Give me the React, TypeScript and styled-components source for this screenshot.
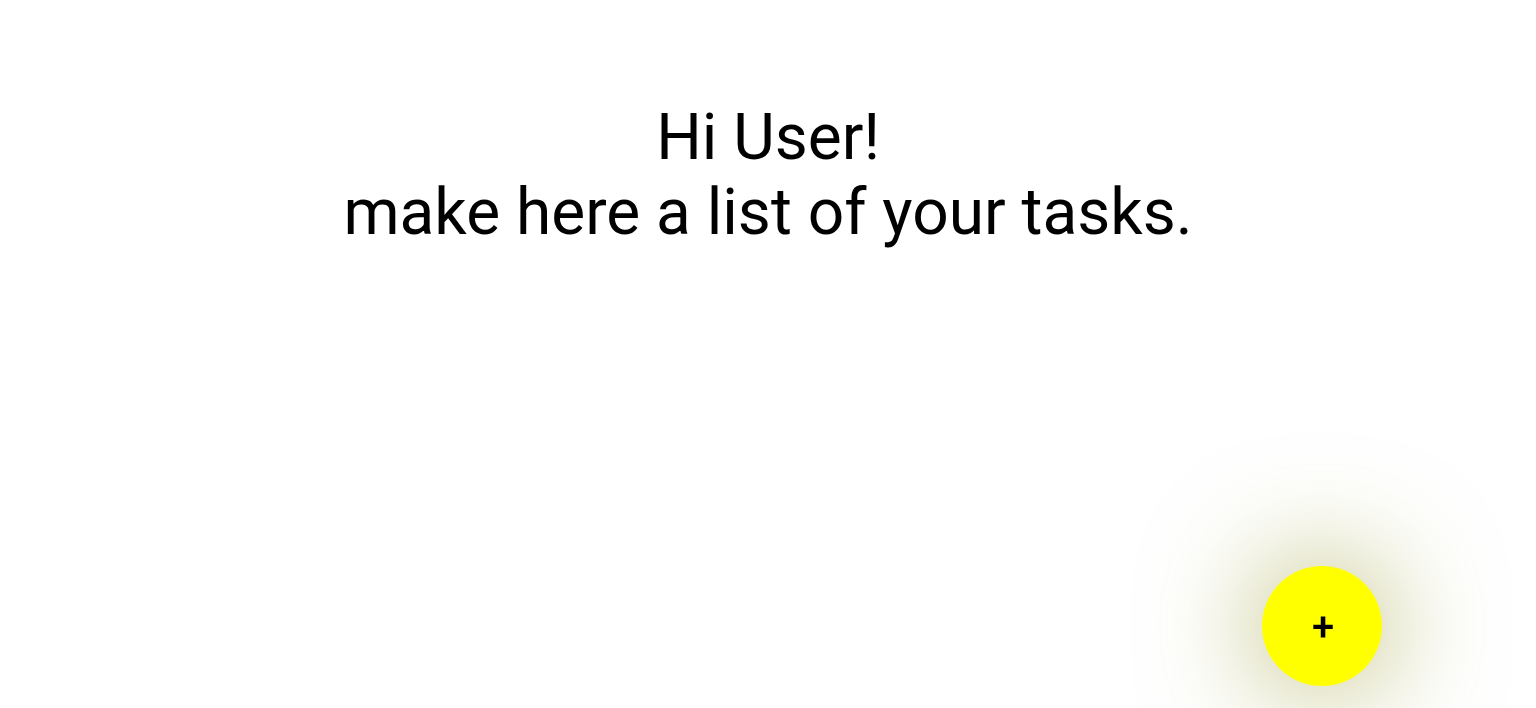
import React from "react";
import styled, { createGlobalStyle } from "styled-components";

const GlobalStyle = createGlobalStyle`
  html, body {
    margin: 0;
    padding: 0;
    background: #ffffff;
    font-family: Roboto, "Liberation Sans", sans-serif;
  }
`;

const Page = styled.main`
  min-height: 708px;
  display: flex;
  flex-direction: column;
  align-items: center;
`;

const Greeting = styled.h1`
  margin: 100px 0 0;
  font-family: Roboto, "Liberation Sans", sans-serif;
  font-weight: 400;
  font-size: 64px;
  line-height: normal;
  color: #000000;
  text-align: center;
`;

const AddButton = styled.button`
  position: fixed;
  right: 154px;
  bottom: 22px;
  width: 120px;
  height: 120px;
  border-radius: 50%;
  border: none;
  background: #ffff00;
  box-shadow: 0 0 110px 10px rgba(150, 150, 40, 0.55);
  display: flex;
  align-items: center;
  justify-content: center;
  font-family: Roboto, "Liberation Sans", sans-serif;
  font-size: 40px;
  font-weight: 500;
  line-height: 1;
  color: #000000;
  cursor: pointer;
  padding: 4px 0 0 2px;
`;

export default function App() {
  return (
    <>
      <GlobalStyle />
      <Page>
        <Greeting>
          Hi User!
          <br />
          make here a list of your tasks.
        </Greeting>
      </Page>
      <AddButton aria-label="add task">+</AddButton>
    </>
  );
}
